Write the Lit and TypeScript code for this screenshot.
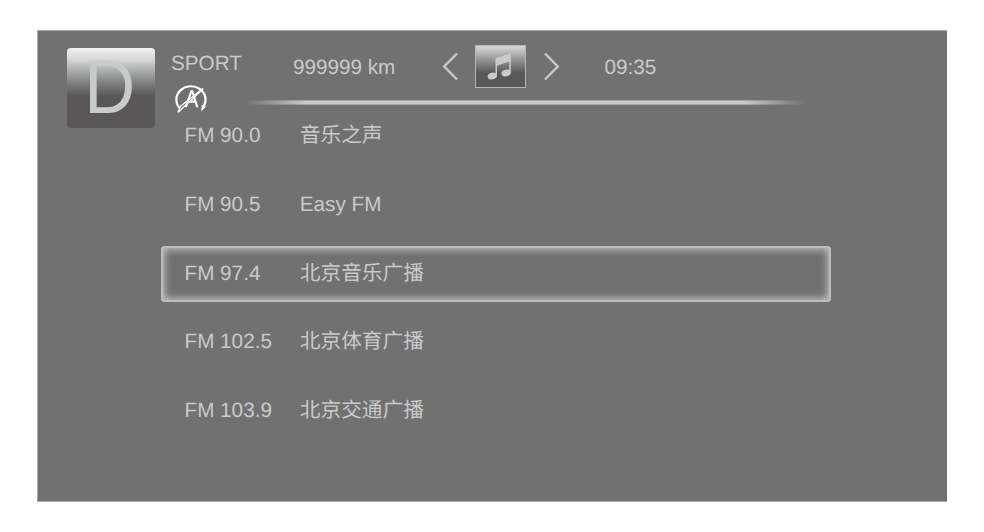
import { LitElement, html, css } from "lit";
import { customElement } from "lit/decorators.js";
import { classMap } from "lit/directives/class-map.js";

interface Station {
  freq: string;
  name: string;
}

const STATIONS: Station[] = [
  { freq: "FM 90.0", name: "音乐之声" },
  { freq: "FM 90.5", name: "Easy FM" },
  { freq: "FM 97.4", name: "北京音乐广播" },
  { freq: "FM 102.5", name: "北京体育广播" },
  { freq: "FM 103.9", name: "北京交通广播" },
];

const SELECTED = 2;

@customElement("app-root")
export class AppRoot extends LitElement {
  static styles = css`
    :host {
      display: block;
      box-sizing: border-box;
      width: 984px;
      height: 532px;
      padding: 30px 37px 30px 37px;
      background: #fff;
      font: 20.7px/24px "Liberation Sans", "Noto Sans CJK SC", sans-serif;
      color: #c9caca;
      text-rendering: geometricPrecision;
    }
    .panel {
      box-sizing: border-box;
      height: 472px;
      background: #717171;
      border: solid #a9aaaa;
      border-width: 1px 0 1px 1px;
      display: flex;
      align-items: flex-start;
    }
    .gear {
      flex: none;
      box-sizing: border-box;
      margin: 17px 6px 0 29px;
      width: 88px;
      height: 80px;
      border-radius: 4px;
      background: linear-gradient(#f4f3f3 0%, #d4d5d5 15%, #a3a6a5 31%, #7c7d7c 45%, #595757 60%, #595757 100%);
      display: flex;
      justify-content: center;
      font-size: 75px;
      line-height: 79px;
    }
    .letter {
      transform: translate(-1.5px, -0.5px) scale(0.94, 1.02);
    }
    .main {
      width: 670px;
    }
    .header {
      height: 69px;
      display: flex;
      align-items: flex-start;
      white-space: nowrap;
    }
    .mode {
      width: 131px;
      box-sizing: border-box;
      padding: 21px 0 0 10px;
    }
    .mode svg {
      margin: 7px 0 0 3px;
    }
    svg {
      display: block;
      flex: none;
    }
    .odo {
      box-sizing: border-box;
      width: 150px;
      padding-left: 1px;
      margin-top: 25px;
    }
    .prev,
    .next {
      margin-top: 20px;
    }
    .tile {
      box-sizing: border-box;
      width: 51px;
      height: 43px;
      margin: 14px 17px 0;
      border: 1px solid #b5b6b6;
      background: linear-gradient(#d8d8d8 0%, #b4b6b5 18%, #8b8c8c 38%, #595757 66%, #595757 100%);
    }
    .clock {
      margin: 25px 0 0 45.5px;
    }
    .rule {
      height: 5px;
      width: 560px;
      margin-left: 84px;
      background: linear-gradient(#a6a8a7 0 1px, #c9caca 1px 4px, #a6a8a7 4px);
      mask-image: linear-gradient(90deg, transparent, #000 11%, #000 89%, transparent);
    }
    .list {
      display: flex;
      flex-direction: column;
      gap: 12.7px;
      margin-top: 3.6px;
    }
    .row {
      box-sizing: border-box;
      height: 56px;
      padding: 15.6px 0 0 23.5px;
      display: flex;
      border-radius: 4px;
    }
    .row.selected {
      box-shadow: inset 0 0 0 2px #bcbebd, inset 0 0 7px 4px #b9bbba;
    }
    .freq {
      width: 115.3px;
    }
  `;

  render() {
    return html`
      <div class="panel">
        <div class="gear"><span class="letter">D</span></div>
        <div class="main">
          <div class="header">
            <div class="mode">
              SPORT
              <svg width="36" height="32" viewBox="0 0 36 32" fill="none" stroke="#fff">
                <path d="M5.2 24.6A14.6 13.4 0 1 1 29.8 23" stroke-width="2.2" />
                <path d="M3.8 29.4 6.6 23.2 28.8 5.4M4.2 29.2 29.4 5.6" stroke-width="1.3" />
                <path d="M11.8 24.2 17.3 8.2 18.3 8.2 23.3 24.2M13.8 18.6H21.6" stroke-width="2.1" />
                <path d="M27.8 22 32 23.4 27.3 28.4Z" fill="#fff" stroke="none" />
              </svg>
            </div>
            <div class="odo">999999 km</div>
            <svg class="prev" width="16" height="32" viewBox="0 0 16 32" fill="none" stroke="#c9caca" stroke-width="2.4">
              <path d="M15 2.5 2.2 15.5 15 28.5" />
            </svg>
            <div class="tile">
              <svg width="49" height="41" viewBox="0 0 49 41" fill="#c9caca">
                <path d="M19.5 12.2 34.8 7V27h-1.6V15.4L21 19.8V30h-1.5Z" />
                <ellipse cx="16.3" cy="30" rx="4.8" ry="3.3" transform="rotate(-14 16.3 30)" />
                <ellipse cx="30.2" cy="27" rx="4.8" ry="3.3" transform="rotate(-14 30.2 27)" />
              </svg>
            </div>
            <svg class="next" width="16" height="32" viewBox="0 0 16 32" fill="none" stroke="#c9caca" stroke-width="2.4">
              <path d="M2 2.5 14.8 15.5 2 28.5" />
            </svg>
            <div class="clock">09:35</div>
          </div>
          <div class="rule"></div>
          <div class="list">
            ${STATIONS.map(
              (s, i) => html`
                <div class=${classMap({ row: true, selected: i === SELECTED })}>
                  <span class="freq">${s.freq}</span>
                  <span>${s.name}</span>
                </div>
              `
            )}
          </div>
        </div>
      </div>
    `;
  }
}
